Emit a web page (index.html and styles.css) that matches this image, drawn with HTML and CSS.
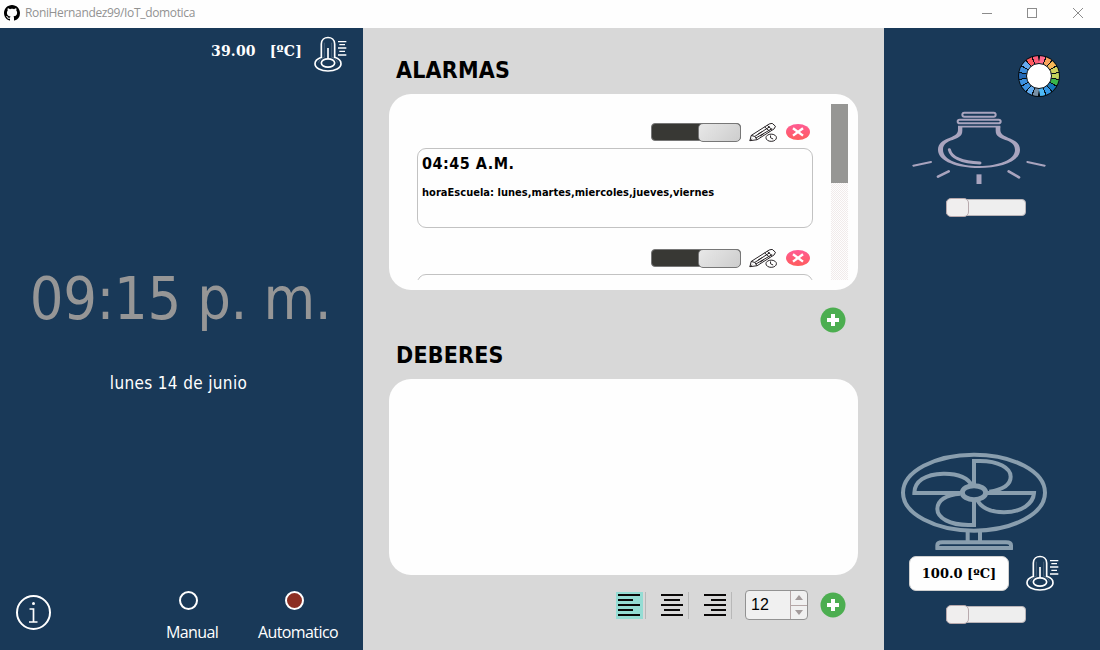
FILE: index.html
```html
<!DOCTYPE html>
<html lang="es">
<head>
<meta charset="utf-8">
<title>RoniHernandez99/IoT_domotica</title>
<link rel="stylesheet" href="styles.css">
</head>
<body>
<svg class="defs" width="0" height="0">
  <symbol id="thermo" viewBox="0 0 99 108">
    <g fill="none" stroke="#fff" stroke-width="5">
      <path d="M22 64V24C22 -2 62 -2 62 24V64C74 68 81 75 81 83C81 96 63 105 42 105S3 96 3 83C3 75 11 68 22 64Z"/>
      <ellipse cx="42" cy="81" rx="20" ry="12.500"/>
      <path d="M42 36V69"/>
      <path d="M31 20V64C22 67 14 73 14 80M53 20V64C62 67 70 73 70 80" stroke-width="1.500" opacity=".45"/>
      <path d="M72 17H97M76 26H93M72 36H97M76 46H93M72 57H97" stroke-width="4"/>
    </g>
  </symbol>
  <symbol id="pencil" viewBox="0 0 84 58">
    <g fill="none" stroke="#241f22" stroke-width="3">
      <path d="M2 54L6 38L61 3L70 1L80 10L76 18L24 51L2 54ZM6 38L17 41L24 51M2 54L8 48M17 41L63 11M20 46L70 17M47 12L62 25M55 7L69 20M27 34L38 27M33 40L44 33"/>
      <ellipse cx="67" cy="45" rx="16" ry="11" fill="#fff"/>
      <path d="M65 38V45L73 49"/>
    </g>
  </symbol>
  <symbol id="remove" viewBox="0 0 24 16">
    <ellipse cx="12" cy="8" rx="12" ry="8" fill="url(#pink)"/>
    <path d="M7 4.2L17 11.6M17 4.2L7 11.6" stroke="#fff" stroke-width="2.4"/>
  </symbol>
  <symbol id="add" viewBox="0 0 26 26">
    <circle cx="13" cy="13" r="12.500" fill="#4cae50"/>
    <path d="M13 7V19M7 13H19" stroke="#fff" stroke-width="4"/>
  </symbol>
  <linearGradient id="pink" x2="0" y2="1"><stop stop-color="#ff5b94"/><stop offset="1" stop-color="#ff5c5c"/></linearGradient>
</svg>

<header class="titlebar">
  <svg class="logo" viewBox="0 0 16 16"><path d="M8 0C3.58 0 0 3.58 0 8c0 3.54 2.29 6.53 5.47 7.59.4.07.55-.17.55-.38 0-.19-.01-.82-.01-1.49-2.01.37-2.53-.49-2.69-.94-.09-.23-.48-.94-.82-1.13-.28-.15-.68-.52-.01-.53.63-.01 1.08.58 1.23.82.72 1.21 1.87.87 2.33.66.07-.52.28-.87.51-1.07-1.78-.2-3.64-.89-3.64-3.95 0-.87.31-1.59.82-2.15-.08-.2-.36-1.02.08-2.12 0 0 .67-.21 2.2.82.64-.18 1.32-.27 2-.27s1.36.09 2 .27c1.53-1.04 2.2-.82 2.2-.82.44 1.1.16 1.92.08 2.12.51.56.82 1.27.82 2.15 0 3.07-1.87 3.75-3.65 3.95.29.25.54.73.54 1.48 0 1.07-.01 1.93-.01 2.2 0 .21.15.46.55.38A8.01 8.01 0 0 0 16 8c0-4.42-3.58-8-8-8Z"/></svg>
  <span class="title">RoniHernandez99/IoT_domotica</span>
  <svg class="window-buttons" viewBox="0 0 105 12" fill="none" stroke="#8c8c8c">
    <path d="M0 6.500H10M91 1L101 11M101 1L91 11"/><rect x="45.500" y="1.500" width="9" height="9"/>
  </svg>
</header>

<main class="window">
  <section class="side-left">
    <div class="room-temp"><span class="value">39.00</span><span>[ºC]</span><svg class="thermo"><use href="#thermo"/></svg></div>
    <div class="clock">09:15 p. m.</div>
    <div class="date">lunes 14 de junio</div>
    <div class="modes">
      <svg class="info" viewBox="0 0 36 36" fill="none" stroke="#fff"><circle cx="18.500" cy="18.500" r="16.500" stroke-width="2"/><path d="M14.500 15H18.500V28M14 28H22.500" stroke-width="1.700"/><circle cx="18.500" cy="9.500" r="1.500" fill="#fff" stroke="none"/></svg>
      <div class="mode manual"><i class="radio"></i><span>Manual</span></div>
      <div class="mode auto"><i class="radio checked"></i><span>Automatico</span></div>
    </div>
  </section>

  <section class="center">
    <h2 class="heading">ALARMAS</h2>
    <div class="panel alarms">
      <div class="alarm-list">
        <div class="alarm-tools"><div class="switch"><i></i></div><svg class="pencil"><use href="#pencil"/></svg><svg class="remove"><use href="#remove"/></svg></div>
        <article class="alarm"><div class="alarm-time">04:45 A.M.</div><div class="alarm-days">horaEscuela: lunes,martes,miercoles,jueves,viernes</div></article>
        <div class="alarm-tools"><div class="switch"><i></i></div><svg class="pencil"><use href="#pencil"/></svg><svg class="remove"><use href="#remove"/></svg></div>
        <article class="alarm"></article>
      </div>
      <div class="scrollbar"><i></i></div>
    </div>
    <div class="add-row"><svg class="add"><use href="#add"/></svg></div>
    <h2 class="heading second">DEBERES</h2>
    <div class="panel"></div>
    <div class="toolbar">
      <span class="align active"><svg viewBox="0 0 22 24"><path d="M0 2H22M0 7H15M0 12H22M0 17H15M0 22H22"/></svg></span>
      <span class="align"><svg viewBox="0 0 22 24"><path d="M0 2H22M3 7H19M0 12H22M3 17H19M0 22H22"/></svg></span>
      <span class="align"><svg viewBox="0 0 22 24"><path d="M0 2H22M7 7H22M0 12H22M7 17H22M0 22H22"/></svg></span>
      <div class="spin"><span>12</span><div class="arrows"><i class="up"></i><i class="down"></i></div></div>
      <svg class="add"><use href="#add"/></svg>
    </div>
  </section>

  <section class="side-right">
    <div class="wheel"><div class="wheel-colors"><div class="wheel-hub"></div></div></div>
    <svg class="bulb" viewBox="27 210 420 225" fill="none" stroke="#a9a4be" stroke-linecap="round">
      <rect x="187" y="218" width="100" height="12" rx="6" stroke-width="6"/>
      <rect x="173" y="239" width="129" height="11" rx="6" stroke-width="6"/>
      <path d="M174 260H301" stroke-width="5" stroke-linecap="butt"/>
      <path d="M174 260H187V272C187 307 129 291 129 330C129 360 180 378 237 378S345 360 345 330C345 291 287 307 287 272V260H301V270C301 298 360 290 360 330C360 365 300 384 237 384S114 365 114 330C114 290 174 298 174 270Z" fill="#a9a4be" fill-rule="evenodd" stroke="none"/>
      <path d="M148 329C154 355 190 367 240 369" stroke-width="9"/>
      <path d="M40 377L93 366M382 366L434 377" stroke-width="6"/>
      <path d="M114 410L146 394M326 394L357 412" stroke-width="8"/>
      <path d="M237 403V432" stroke-width="15" stroke-linecap="butt"/>
    </svg>
    <div class="slider"><i></i></div>
    <svg class="fan" viewBox="27 33 450 300" fill="none" stroke="#899eae" stroke-width="12">
      <ellipse cx="252" cy="158" rx="213" ry="114"/>
      <ellipse cx="252" cy="158" rx="35" ry="21" stroke-width="15"/>
      <path d="M252 137V63H270C325 63 362 84 362 110C362 134 335 149 298 155M290 159H432C430 190 395 217 342 217C300 217 270 201 262 179M252 179V255H235C180 255 142 234 142 207C142 181 168 164 211 161M211 159H73C73 125 105 102 160 101C205 100 238 115 245 137"/>
      <path d="M233 273V305M270 273V305M142 329V316Q142 307 157 307H348Q363 307 363 316V329M137 324H368"/>
    </svg>
    <div class="fan-temp"><span class="target">100.0 [ºC]</span><svg class="thermo"><use href="#thermo"/></svg></div>
    <div class="slider fan-speed"><i></i></div>
  </section>
</main>
</body>
</html>
```
FILE: styles.css
```css
* { box-sizing: border-box; }
body {
  margin: 0;
  width: 1100px;
  height: 650px;
  overflow: hidden;
  font-family: "DejaVu Sans Condensed", "DejaVu Sans", sans-serif;
  font-stretch: condensed;
}
svg { display: block; flex: none; }

.titlebar {
  display: flex;
  align-items: center;
  height: 28px;
  padding: 0 13px 3px 4px;
  background: #fefefe;
}
.logo { width: 16px; height: 16px; }
.title {
  flex: 1;
  margin-left: 5px;
  font: 12px "Open Sans", sans-serif;
  letter-spacing: -.35px;
  color: #929292;
}
.window-buttons { width: 105px; height: 12px; }

.window {
  display: grid;
  grid-template-columns: 363px 521px 216px;
  height: 622px;
}

.side-left, .side-right { background: #193958; color: #fff; }
.side-left { display: flex; flex-direction: column; }
.room-temp {
  display: flex;
  justify-content: flex-end;
  height: 46px;
  padding: 8px 16px 0 0;
  font: bold 14px/30px "DejaVu Serif", serif;
  letter-spacing: .2px;
}
.room-temp .value { margin-right: 14px; }
.room-temp .thermo { margin-left: 12px; }
.thermo { width: 33px; height: 36px; }
.clock {
  margin-top: 190px;
  height: 70px;
  line-height: 70px;
  padding-right: 2px;
  text-align: center;
  font-size: 59px;
  letter-spacing: -.4px;
  color: #969696;
  white-space: nowrap;
}
.date {
  margin-top: 36px;
  height: 26px;
  line-height: 26px;
  padding-right: 6px;
  text-align: center;
  font-size: 17px;
  letter-spacing: .35px;
}
.modes {
  display: flex;
  margin-top: auto;
  height: 60px;
  padding-left: 15px;
}
.info { width: 36px; height: 36px; margin-top: 4px; }
.mode {
  display: flex;
  flex-direction: column;
  align-items: center;
  width: 90px;
  font: 16px/20px "Open Sans", sans-serif;
  letter-spacing: -.6px;
}
.mode.manual { margin-left: 96px; }
.mode.auto { margin-left: 16px; }
.radio {
  width: 19px;
  height: 19px;
  margin: 1px 7px 12px 0;
  border: 2px solid #fff;
  border-radius: 50%;
}
.radio.checked { background: #8c2f23; }

.center { padding: 28px 26px 0; background: #d8d8d8; }
.heading {
  margin: 0;
  height: 38px;
  padding-left: 7px;
  font-size: 23px;
  line-height: 28px;
  letter-spacing: .2px;
}
.heading.second { margin-top: 8px; }
.panel { height: 196px; border-radius: 22px; background: #fefefe; }
.alarms { display: flex; padding: 10px 10px 10px 28px; }
.alarm-list { width: 396px; height: 176px; overflow: hidden; }
.alarm-tools {
  display: flex;
  align-items: center;
  justify-content: flex-end;
  height: 44px;
  padding: 12px 3px 0 0;
}
.alarm + .alarm-tools { height: 46px; padding-top: 14px; }
.switch {
  width: 90px;
  height: 18px;
  border: 1px solid #777;
  border-radius: 4px;
  background: #383834;
}
.switch i {
  display: block;
  width: 43px;
  height: 19px;
  margin: -1px -1px 0 auto;
  border: 1px solid #777;
  border-radius: 5px;
  background: linear-gradient(135deg, #e8e8e8, #cdcdcd);
}
.pencil { width: 28px; height: 19px; margin-left: 8px; }
.remove { width: 24px; height: 16px; margin-left: 9px; }
.alarm {
  height: 80px;
  border: 1px solid #c2c2c2;
  border-radius: 9px;
  padding: 4px;
  font-weight: bold;
  color: #000;
}
.alarm-time { font-size: 16px; line-height: 22px; letter-spacing: .5px; }
.alarm-days { margin-top: 10px; font-size: 11px; line-height: 16px; letter-spacing: .03px; white-space: nowrap; }
.scrollbar {
  width: 17px;
  margin-left: auto;
  background: repeating-conic-gradient(#f1ebeb 0 25%, #fefefe 0 50%) 0 0 / 2px 2px;
}
.scrollbar i { display: block; height: 79px; background: #969694; }
.add-row { display: flex; justify-content: flex-end; padding: 17px 12px 0 0; }
.add { width: 26px; height: 26px; }

.toolbar { display: flex; align-items: center; padding: 15px 12px 0 227px; }
.align {
  width: 27px;
  height: 27px;
  margin-right: 16px;
  padding: 1px 3px 2px 2px;
  box-shadow: 2px 0 0 #d8d8d8, 3px 0 0 #b8b8b8;
}
.align.active { background: #94dcd3; }
.align svg { width: 22px; height: 24px; fill: none; stroke: #0a0808; stroke-width: 2; }
.spin {
  display: flex;
  width: 63px;
  height: 30px;
  border: 1px solid #929292;
  border-radius: 4px;
  background: #f0f0f0;
  color: #000;
  font: 16px/28px "Liberation Sans", sans-serif;
}
.spin span { flex: 1; padding-left: 5px; }
.arrows { display: grid; width: 17px; border-left: 1px solid #b5a7a7; }
.arrows i { display: grid; place-items: center; }
.arrows i + i { border-top: 1px solid #b5a7a7; }
.arrows i::before { content: ""; border: 4px solid transparent; }
.arrows .up::before { border-top: 0; border-bottom: 5px solid #a39b9b; }
.arrows .down::before { border-bottom: 0; border-top: 5px solid #a39b9b; }
.toolbar .add { margin-left: auto; }

.side-right { padding: 27px 0 0 17px; }
.wheel {
  width: 42px;
  height: 42px;
  margin-left: 117px;
  padding: 1px;
  border-radius: 50%;
  background: #050d14;
}
.wheel-colors {
  display: grid;
  place-items: center;
  height: 40px;
  border-radius: 50%;
  background:
    repeating-conic-gradient(#050d14 0 1.500deg, transparent 2deg 18deg, #050d14 18.500deg 20deg),
    conic-gradient(#ff6b8f 20deg, #f9a45c 0 40deg, #f5b858 0 60deg, #cfd05c 0 80deg, #c2d35c 0 100deg,
      #39b54a 0 120deg, #1676b8 0 140deg, #3597e5 0 160deg, #4db8f5 0 180deg, #7890a5 0 200deg,
      #62acf0 0 220deg, #3d91e0 0 260deg, #2469b5 0 280deg, #3d8cda 0 300deg, #65a9f0 0 320deg,
      #ff5b5f 0 340deg, #ff5c79 0);
}
.wheel-hub {
  width: 26px;
  height: 26px;
  border: 1px solid #050d14;
  border-radius: 50%;
  background: #fff;
}
.bulb { width: 140px; height: 75px; margin: 13px 0 0 8px; }
.slider {
  width: 80px;
  height: 17px;
  margin: 14px 0 0 45px;
  border: 1px solid #b9b4b8;
  border-radius: 4px;
  background: #eee;
}
.slider.fan-speed { margin-top: 15px; }
.slider i {
  display: block;
  width: 23px;
  height: 19px;
  margin: -2px 0 0 -1px;
  border: 1px solid #b8a9ad;
  border-radius: 5px;
  background: #f0eeee;
}
.fan { width: 150px; height: 100px; margin: 235px 0 0 -2px; }
.fan-temp { display: flex; margin: 5px 0 0 8px; }
.target {
  width: 100px;
  height: 35px;
  border: 1px solid #cfcfcf;
  border-radius: 7px;
  background: #fefefe;
  color: #000;
  text-align: center;
  font: bold 13px/34px "DejaVu Serif", serif;
}
.fan-temp .thermo { margin-left: 17px; margin-top: -1px; }
```
